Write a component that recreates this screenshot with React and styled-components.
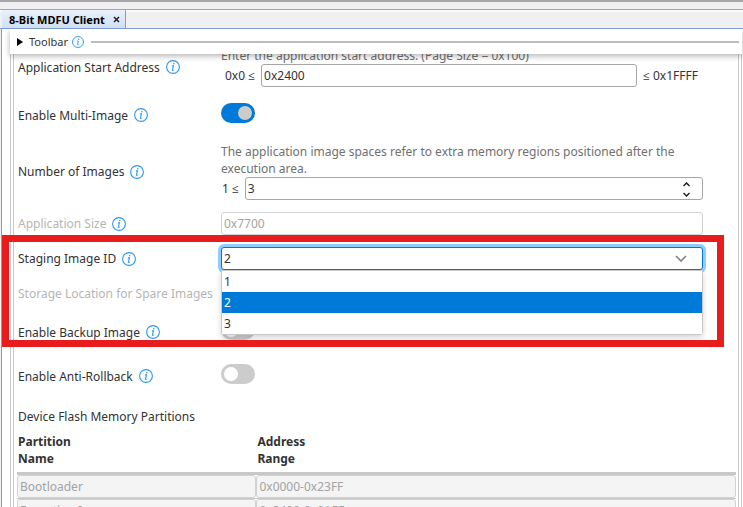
import React, { useState } from "react";
import styled, { createGlobalStyle } from "styled-components";

const GlobalStyle = createGlobalStyle`
  * {
    box-sizing: border-box;
  }

  body {
    margin: 0;
    overflow: hidden;
    background-color: #f0f0f0;
    color: #333333;
    font-family: "Noto Sans", "Open Sans", sans-serif;
    font-size: 12px;
    line-height: 17px;
  }

  input, select, button {
    font: inherit;
    color: inherit;
  }
`;

// Window frame
const Window = styled.div`
  height: 100vh;
  display: flex;
  flex-direction: column;
`;

const Splitter = styled.div`
  flex: none;
  height: 10px;
  background-color: #f0f0f0;
  border-top: 2px solid #a8a8a8;
  border-bottom: 1px solid #9aa9b8;
`;

const TabStrip = styled.nav`
  flex: none;
  height: 19px;
  display: flex;
  padding-left: 2px;
  border-top: 2px solid #fafafa;
  border-bottom: 1px solid #7f9fc6;
`;

const Tab = styled.div`
  display: flex;
  align-items: center;
  gap: 8px;
  margin-top: -2px;
  padding: 0 5px 0 7px;
  background: linear-gradient(#eaf2fc, #cfdff2);
  border-right: 1px solid #7f9fc6;
  color: #000000;
  font-size: 11px;
  font-weight: 700;
`;

const CloseButton = styled.button`
  display: flex;
  padding: 0;
  border: none;
  background: none;
`;

const View = styled.main`
  flex: 1;
  min-height: 0;
  overflow: hidden;
  margin-left: 1px;
  padding: 0 1px 0 8px;
  display: flex;
  flex-direction: column;
  background-color: #ffffff;
  border-left: 1px solid #7f9fc6;
`;

const Toolbar = styled.header`
  flex: none;
  position: relative;
  z-index: 2;
  height: 25px;
  display: flex;
  align-items: center;
  gap: 4px;
  padding: 0 3px 0 7px;
  background-color: #ffffff;
  box-shadow: 0 2px 6px rgba(0, 0, 0, 0.3);
`;

const ToolbarToggle = styled.button`
  display: flex;
  align-items: center;
  gap: 6px;
  padding: 0;
  border: none;
  background: none;
  font-size: 11px;
`;

const ToolbarLine = styled.hr`
  flex: 1;
  height: 2px;
  margin: 0 0 0 3px;
  border: none;
  background-color: #bdbdbd;
`;

// Form panel
const Panel = styled.section`
  flex: 1;
  min-height: 0;
  padding: 0 3px;
  border: solid #c8c8c8;
  border-width: 0 1px;
`;

const PanelContent = styled.div`
  min-height: 100%;
  margin: -7px -1px 0;
  padding: 0 2px 0 3px;
  display: flex;
  flex-direction: column;
  gap: 12px;
  border: solid #c8c8c8;
  border-width: 0 1px;
`;

const Row = styled.div`
  display: grid;
  grid-template-columns: 204px 1fr;
  align-items: center;
  min-height: ${(props) => props.$height || 23}px;
  padding-right: 33px;
`;

const LabelCell = styled.div`
  display: flex;
  align-items: center;
  gap: 6px;
  padding-left: 1px;
  white-space: nowrap;
  color: ${(props) => (props.$muted ? "#b5b5b5" : "#333333")};
`;

const Field = styled.div`
  min-width: 0;
  position: relative;
`;

const Hint = styled.p`
  margin: 0;
  color: #707070;
`;

const Range = styled.div`
  display: flex;
  align-items: center;
  gap: 6px;
  padding-left: ${(props) => props.$indent || 1}px;
  white-space: nowrap;
`;

const Max = styled.span`
  flex: none;
  width: 60px;
`;

const TextInput = styled.input`
  display: block;
  width: 100%;
  min-width: 0;
  height: 23px;
  padding: 0 2px;
  background-color: #ffffff;
  border: 1px solid #a6a6a6;
  border-radius: 3px;
  outline: none;
  appearance: textfield;

  &::-webkit-inner-spin-button {
    display: none;
  }

  &:disabled {
    color: #a3a3a3;
    border-color: #d2d2d2;
  }
`;

const CompactInput = styled(TextInput)`
  height: 22px;
`;

const NumberBox = styled.div`
  flex: 1;
  position: relative;
`;

const Spinner = styled.div`
  position: absolute;
  top: 2px;
  right: 12px;
  display: flex;
  flex-direction: column;
`;

const SpinButton = styled.button`
  display: flex;
  align-items: center;
  justify-content: center;
  width: 9px;
  height: 10px;
  padding: 0;
  border: none;
  background: none;
`;

const Switch = styled.input`
  appearance: none;
  display: block;
  width: 34px;
  height: 20px;
  margin: 0 0 4px;
  padding: 3px;
  border-radius: 10px;
  background-color: #cccccc;

  &::before {
    content: "";
    display: block;
    width: 14px;
    height: 14px;
    border-radius: 50%;
    background-color: #ffffff;
  }

  &:checked {
    background-color: #007ad9;
  }

  &:checked::before {
    margin-left: 14px;
    background-color: #cccccc;
  }
`;

const Select = styled.select`
  appearance: none;
  display: block;
  width: 100%;
  height: 23px;
  padding: 0 2px;
  background-color: #ffffff;
  border: 1px solid #007ad9;
  border-radius: 3px;
  outline: none;
  box-shadow: 0 0 0 3px #8dcdff;
`;

const SelectArrow = styled.span`
  position: absolute;
  top: 8px;
  right: 16px;
  display: flex;
  pointer-events: none;
`;

const OptionList = styled.ul`
  position: absolute;
  z-index: 1;
  top: 23px;
  left: 0;
  right: 0;
  margin: 0;
  padding: 0;
  list-style: none;
  background-color: #ffffff;
  border: 1px solid #c8c8c8;
  border-radius: 0 0 3px 3px;
  box-shadow: 0 3px 6px rgba(0, 0, 0, 0.16);
`;

const Option = styled.li`
  padding: 2px;
  color: ${(props) => (props.$selected ? "#ffffff" : "#333333")};
  background-color: ${(props) => (props.$selected ? "#007ad9" : "#ffffff")};
`;

const HighlightGroup = styled.div`
  position: relative;
  display: flex;
  flex-direction: column;
  gap: 12px;
`;

const Highlight = styled.div`
  position: absolute;
  z-index: 3;
  top: -12px;
  right: 12px;
  bottom: 1px;
  left: -15px;
  border: 7px solid #e81c1c;
  pointer-events: none;
`;

// Partition table
const Partitions = styled.table`
  width: 100%;
  table-layout: fixed;
  border-collapse: collapse;

  caption {
    height: 29px;
    padding: 4px 0 0 1px;
    text-align: left;
  }

  th {
    width: 33.3%;
    padding: 0 0 5px 1px;
    text-align: left;
    font-weight: 700;
  }

  th:last-child {
    width: auto;
  }

  thead {
    border-bottom: 3px solid #c8c8c8;
  }

  td {
    padding: 0;
    border-bottom: 1px solid #c8c8c8;
  }
`;

const CellInput = styled(TextInput)`
  background-color: #f4f4f4;
`;

const InfoIcon = ({ size = 14 }) => (
    <svg width={size} height={size} viewBox="0 0 14 14" fill="none" stroke="#2b98f0" aria-hidden="true">
        <circle cx="7" cy="7" r="6.4" strokeWidth="1.1" />
        <path d="M6 5.9H7.4L6.4 10.2H7.8" strokeWidth="1.1" />
        <circle cx="7.8" cy="3.8" r="0.8" fill="#2b98f0" stroke="none" />
    </svg>
);

const FieldRow = ({ id, label, muted, noInfo, height, children }) => (
    <Row $height={height}>
        <LabelCell $muted={muted}>
            <label htmlFor={id}>{label}</label>
            {!noInfo && <InfoIcon />}
        </LabelCell>
        <Field>{children}</Field>
    </Row>
);

const stagingIds = ["1", "2", "3"];

const partitions = [
    { name: "Bootloader", range: "0x0000-0x23FF" },
    { name: "Execution Image", range: "0x2400-0x9AFF" },
];

function App() {
    const [startAddress, setStartAddress] = useState("0x2400");
    const [multiImage, setMultiImage] = useState(true);
    const [images, setImages] = useState(3);
    const [stagingId, setStagingId] = useState("2");
    const [backup, setBackup] = useState(false);
    const [antiRollback, setAntiRollback] = useState(false);

    return (
        <Window>
            <GlobalStyle />
            <Splitter />
            <TabStrip>
                <Tab>
                    8-Bit MDFU Client
                    <CloseButton aria-label="Close tab">
                        <svg width="7" height="7" viewBox="0 0 7 7" stroke="#222222" strokeWidth="1.6">
                            <path d="M1 1L6 6M6 1L1 6" />
                        </svg>
                    </CloseButton>
                </Tab>
            </TabStrip>
            <View>
                <Toolbar>
                    <ToolbarToggle>
                        <svg width="6" height="8" viewBox="0 0 6 8" fill="#000000">
                            <path d="M0 0L6 4L0 8Z" />
                        </svg>
                        Toolbar
                    </ToolbarToggle>
                    <InfoIcon size={12} />
                    <ToolbarLine />
                </Toolbar>
                <Panel>
                    <PanelContent>
                        <FieldRow id="start" label="Application Start Address">
                            <Hint>Enter the application start address. (Page Size = 0x100)</Hint>
                            <Range $indent={4}>
                                0x0 ≤
                                <TextInput
                                    id="start"
                                    value={startAddress}
                                    onChange={(e) => setStartAddress(e.target.value)}
                                />
                                <Max>≤ 0x1FFFF</Max>
                            </Range>
                        </FieldRow>
                        <FieldRow id="multi" label="Enable Multi-Image" height={32}>
                            <Switch
                                id="multi"
                                type="checkbox"
                                checked={multiImage}
                                onChange={() => setMultiImage((prev) => !prev)}
                            />
                        </FieldRow>
                        <FieldRow id="images" label="Number of Images">
                            <Hint>
                                The application image spaces refer to extra memory regions positioned after the
                                execution area.
                            </Hint>
                            <Range>
                                1 ≤
                                <NumberBox>
                                    <TextInput
                                        id="images"
                                        type="number"
                                        min="1"
                                        value={images}
                                        onChange={(e) => setImages(Number(e.target.value))}
                                    />
                                    <Spinner>
                                        <SpinButton aria-label="Increase" onClick={() => setImages(images + 1)}>
                                            <svg width="7" height="5" viewBox="0 0 7 5" fill="none" stroke="#222222" strokeWidth="1.5">
                                                <path d="M0.5 4L3.5 1L6.5 4" />
                                            </svg>
                                        </SpinButton>
                                        <SpinButton aria-label="Decrease" onClick={() => setImages(images - 1)}>
                                            <svg width="7" height="5" viewBox="0 0 7 5" fill="none" stroke="#222222" strokeWidth="1.5">
                                                <path d="M0.5 1L3.5 4L6.5 1" />
                                            </svg>
                                        </SpinButton>
                                    </Spinner>
                                </NumberBox>
                            </Range>
                        </FieldRow>
                        <FieldRow id="size" label="Application Size" muted>
                            <TextInput id="size" value="0x7700" disabled />
                        </FieldRow>
                        <HighlightGroup>
                            <FieldRow id="staging" label="Staging Image ID">
                                <Select
                                    id="staging"
                                    value={stagingId}
                                    onChange={(e) => setStagingId(e.target.value)}
                                >
                                    {stagingIds.map((value) => (
                                        <option key={value}>{value}</option>
                                    ))}
                                </Select>
                                <SelectArrow>
                                    <svg width="12" height="8" viewBox="0 0 12 8" fill="none" stroke="#848484" strokeWidth="1.6">
                                        <path d="M1 1L6 6L11 1" />
                                    </svg>
                                </SelectArrow>
                                <OptionList role="listbox">
                                    {stagingIds.map((value) => (
                                        <Option
                                            key={value}
                                            role="option"
                                            aria-selected={value === stagingId}
                                            $selected={value === stagingId}
                                            onClick={() => setStagingId(value)}
                                        >
                                            {value}
                                        </Option>
                                    ))}
                                </OptionList>
                            </FieldRow>
                            <FieldRow
                                id="storage"
                                label="Storage Location for Spare Images"
                                height={22}
                                muted
                                noInfo
                            >
                                <CompactInput id="storage" disabled />
                            </FieldRow>
                            <FieldRow id="backup" label="Enable Backup Image" height={32}>
                                <Switch
                                    id="backup"
                                    type="checkbox"
                                    checked={backup}
                                    onChange={() => setBackup((prev) => !prev)}
                                />
                            </FieldRow>
                            <Highlight />
                        </HighlightGroup>
                        <FieldRow id="rollback" label="Enable Anti-Rollback" height={32}>
                            <Switch
                                id="rollback"
                                type="checkbox"
                                checked={antiRollback}
                                onChange={() => setAntiRollback((prev) => !prev)}
                            />
                        </FieldRow>
                        <Partitions>
                            <caption>Device Flash Memory Partitions</caption>
                            <thead>
                                <tr>
                                    <th>Partition<br />Name</th>
                                    <th>Address<br />Range</th>
                                </tr>
                            </thead>
                            <tbody>
                                {partitions.map((partition) => (
                                    <tr key={partition.name}>
                                        <td>
                                            <CellInput aria-label="Partition name" value={partition.name} disabled />
                                        </td>
                                        <td>
                                            <CellInput aria-label="Address range" value={partition.range} disabled />
                                        </td>
                                    </tr>
                                ))}
                            </tbody>
                        </Partitions>
                    </PanelContent>
                </Panel>
            </View>
        </Window>
    );
}

export default App;
